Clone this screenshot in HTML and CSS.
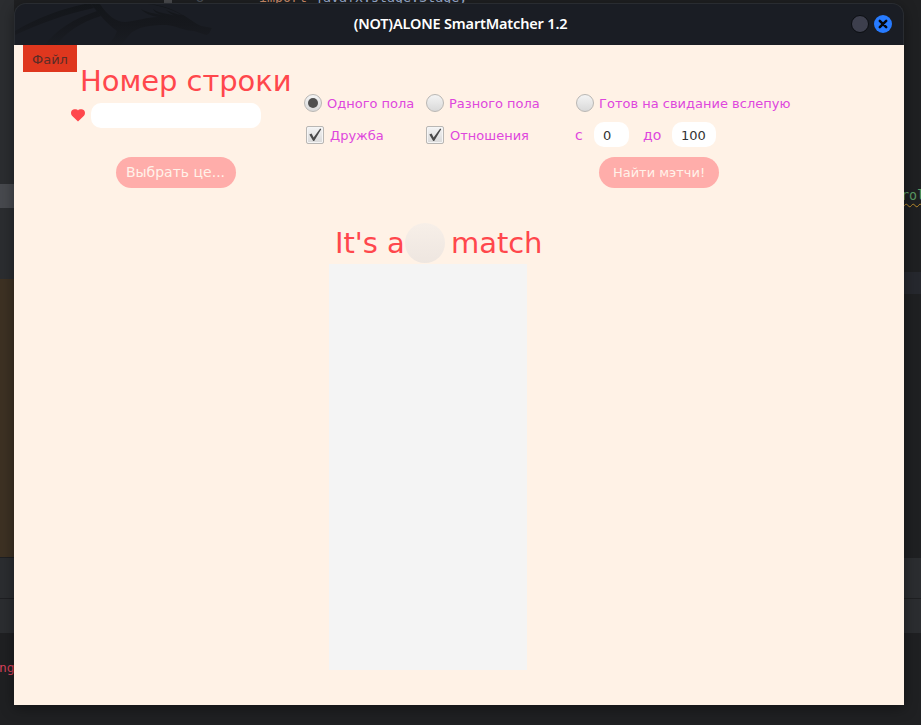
FILE: index.html
```
<!DOCTYPE html>
<html lang="ru">
<head>
<meta charset="utf-8">
<title>(NOT)ALONE SmartMatcher 1.2</title>
<link rel="stylesheet" href="styles.css">
</head>
<body>
<div class="desktop">
  <div class="editor">
    <div class="side">
      <div class="side-tree"></div>
      <div class="side-selected"></div>
      <div class="side-folders"></div>
      <div class="side-libs"></div>
      <div class="side-tool"></div>
      <div class="side-tool-low"></div>
      <div class="side-console">ng</div>
    </div>
    <div class="code">
      <div class="code-line"><span class="scroll"></span><span class="num">8</span><span class="statement"><b>import</b> javafx.stage.Stage;</span></div>
      <div class="code-error"><span>rol</span></div>
      <div class="code-current"></div>
      <div class="code-panel"></div>
      <div class="code-panel-low"></div>
    </div>
  </div>

  <div class="window">
    <header class="titlebar">
      <svg class="dragon" width="250" height="42" viewBox="0 0 250 42">
        <defs><linearGradient id="fade" gradientUnits="userSpaceOnUse" x1="0" y1="0" x2="0" y2="42"><stop offset="0" stop-color="#13161a"/><stop offset=".5" stop-color="#16181d"/><stop offset="1" stop-color="#1a1d23"/></linearGradient></defs>
        <g fill="url(#fade)">
          <path d="M0 27C22 14 46 5 70 0H76L79 4C50 10 24 20 0 31Z"/>
          <path d="M30 41C41 26 58 15 82 7L86 12C66 18 51 28 42 41Z"/>
          <path d="M76 0H85C92 11 101 18 110 18C122 17 132 13 143 13C136 12 129 9 126 5C132 9 141 9 150 12C143 10 139 8 138 5C147 11 156 9 162 13C156 10 153 8 151 6C160 10 165 11 168 11L182 20L186 22C190 23 194 23 197 24C195 27 195 30 191 31L179 27C169 27 162 22 151 21C134 21 124 23 116 29L106 41H92C99 35 101 30 102 27C92 20 84 10 76 0Z"/>
          <path d="M132 0C152 0 171 12 181 20L177 19C166 9 151 2 132 0Z"/>
        </g>
      </svg>
      <h1>(NOT)ALONE SmartMatcher 1.2</h1>
      <div class="controls">
        <span class="minimize"></span>
        <span class="close"><svg width="10" height="10" viewBox="0 0 10 10"><path d="M1.8 1.8L8.2 8.2M8.2 1.8L1.8 8.2" stroke="#06080d" stroke-width="2.5" stroke-linecap="round"/></svg></span>
      </div>
    </header>
    <main>
      <nav class="menu">Файл</nav>
      <section class="form">
        <div class="query">
          <h2>Номер строки</h2>
          <div class="search">
            <svg width="14" height="13" viewBox="0 0 14 13"><path d="M7 12.6L1 6.8C-.6 4.8-.2 1.7 1.8 .8C3.8 0 6 .2 7 1.4C8 .2 10.2 0 12.2 .8C14.2 1.7 14.6 4.8 13 6.8Z" fill="#ff474c"/></svg>
            <span class="field"></span>
          </div>
          <span class="button choose">Выбрать це...</span>
        </div>
        <div class="options">
          <span class="option"><i class="radio on"></i>Одного пола</span>
          <span class="option"><i class="radio"></i>Разного пола</span>
          <span class="option check friend"><i class="box"><svg width="16" height="16" viewBox="0 0 16 16"><path d="M2.3 7.6L4.6 6.6L6.6 10.4L13.2 1.6L14.2 2.2L7.2 14H6.2Z" fill="#4b4b4b"/></svg></i>Дружба</span>
          <span class="option check"><i class="box"><svg width="16" height="16" viewBox="0 0 16 16"><path d="M2.3 7.6L4.6 6.6L6.6 10.4L13.2 1.6L14.2 2.2L7.2 14H6.2Z" fill="#4b4b4b"/></svg></i>Отношения</span>
        </div>
        <div class="filters">
          <span class="option"><i class="radio"></i>Готов на свидание вслепую</span>
          <div class="range"><span class="from">с</span><span class="field min">0</span><span class="to">до</span><span class="field max">100</span></div>
          <span class="button find">Найти мэтчи!</span>
        </div>
      </section>
      <section class="result">
        <h2><span class="its">It's a</span><i class="avatar"></i><span>match</span></h2>
        <div class="list"></div>
      </section>
    </main>
  </div>
</div>
</body>
</html>
```
FILE: styles.css
```
* { box-sizing: border-box; }
body { margin: 0; font-family: "DejaVu Sans", sans-serif; }
.desktop { position: relative; width: 921px; height: 725px; overflow: hidden; background: #1f2022; }

/* Editor behind the window */
.editor { display: flex; height: 725px; font-family: "DejaVu Sans Mono", monospace; font-size: 13.3px; }
.side { width: 14px; display: flex; flex-direction: column; }
.side-tree { height: 184px; background: #2b2d30; }
.side-selected { height: 24px; background: #47494e; }
.side-folders { height: 71px; background: #2b2d30; }
.side-libs { height: 278px; background: #3d3123; }
.side-tool { height: 41px; background: #2b2d30; border-top: 1px solid #1e1f22; }
.side-tool-low { height: 35px; background: #2b2d30; border-top: 1px solid #1e1f22; }
.side-console { padding-top: 26px; line-height: 18px; font-size: 13px; color: #d5405a; margin-left: -1px; }
.code { flex: 1; min-width: 0; }
.code-line { display: flex; height: 10px; line-height: 18px; color: #9eb2d5; }
.scroll { width: 8px; height: 3px; margin-left: 150px; background: #4b4c4f; }
.num { width: 66px; padding-left: 24px; margin-top: -11px; color: #4b5059; }
.statement { margin: -11px 0 0 21px; white-space: pre; }
.statement b { font-weight: 400; color: #cf8e6d; }
.code-error { height: 24px; margin: 176px 0 0 887px; line-height: 20px; color: #5b9a64; text-decoration: underline wavy #b88a2b 1px; text-underline-offset: 3px; }
.code-current { height: 22px; margin-top: 62px; background: #26282e; }
.code-panel { height: 40px; margin-top: 264px; background: #2b2d30; }
.code-panel-low { height: 34px; margin-top: 1px; background: #2b2d30; }

/* Application window */
.window { position: absolute; left: 14px; top: 3px; width: 890px; height: 702px; border-radius: 12px 12px 0 0; box-shadow: 0 3px 14px rgba(0, 0, 0, .4); }
.titlebar { display: grid; grid-template-columns: 1fr auto 1fr; align-items: center; height: 42px; background: #1a1d24; border: 1px solid #292c31; border-bottom: 0; border-radius: 12px 12px 0 0; overflow: hidden; }
.dragon { align-self: start; }
.titlebar h1 { margin: 0; padding: 0 0 4px 3px; font: 600 14.5px/20px "Noto Sans", sans-serif; letter-spacing: -.17px; color: #fff; white-space: nowrap; }
.controls { display: flex; justify-content: flex-end; align-items: center; gap: 5px; padding: 0 11px 2px 0; }
.minimize { width: 18px; height: 18px; border: 1px solid #0c0e12; border-radius: 50%; background: #3d3f4d; }
.close { display: grid; place-items: center; width: 18px; height: 18px; border-radius: 50%; background: #277bff; }
main { height: 660px; background: #fff2e6; }
.menu { width: 54px; height: 27px; margin-left: 9px; padding-left: 9px; line-height: 29px; font-size: 13px; color: #5b2c26; background: #df371e; }
h2 { margin: 0; font-size: 29px; line-height: 34px; font-weight: 400; letter-spacing: -.06px; color: #ff474c; white-space: nowrap; }
.form { display: flex; height: 124px; margin-top: -8px; padding-left: 57px; }
.query { width: 233px; }
.query h2 { padding-left: 9px; }
.search { display: flex; align-items: center; gap: 6px; margin: 5px 0 29px; }
.field { height: 25px; border-radius: 10px; background: #fff; color: #333; font-size: 13px; line-height: 27px; padding-left: 9px; }
.search .field { width: 170px; }
.button { display: block; width: 120px; height: 31px; border-radius: 15.5px; background: #ffadaa; color: #fff2e9; line-height: 31px; text-align: center; white-space: nowrap; }
.choose { margin-left: 45px; padding-right: 1px; font-size: 14px; }
.options { display: grid; grid-template-columns: 122px 150px; grid-template-rows: 18px 18px; row-gap: 14px; padding-top: 30px; width: 272px; align-content: start; }
.option { display: flex; align-items: center; gap: 5px; height: 18px; font-size: 13px; color: #de47dd; white-space: nowrap; }
.check { gap: 6px; }
.friend { padding-left: 2px; }
.radio, .box { display: grid; place-items: center; width: 18px; height: 18px; border: 1px solid #b9b7b4; background: linear-gradient(#f4f4f4, #d9d9d9); }
.radio { border-radius: 50%; }
.box { border-radius: 2px; box-shadow: inset 0 0 0 1px #f5f5f5; }
.on::after { content: ""; width: 10px; height: 10px; border-radius: 50%; background: #505050; }
.filters { padding-top: 30px; }
.range { display: flex; margin: 10px 0; font-size: 14px; line-height: 26px; color: #de47dd; height: 25px; }
.from { width: 19px; margin-left: -1px; }
.min { width: 35px; }
.to { width: 29px; margin: 0 0 0 14px; }
.max { width: 44px; }
.find { margin-left: 23px; font-size: 13px; }
.result { width: 260px; margin: 35px 0 0 315px; }
.result h2 { display: flex; align-items: center; height: 40px; }
.its { width: 76px; padding-left: 6px; }
.avatar { width: 40px; height: 40px; margin-right: 6px; border-radius: 50%; background: linear-gradient(#f7efe8, #eee6e0); }
.list { width: 198px; height: 406px; margin-top: 1px; background: #f4f4f4; }
```
